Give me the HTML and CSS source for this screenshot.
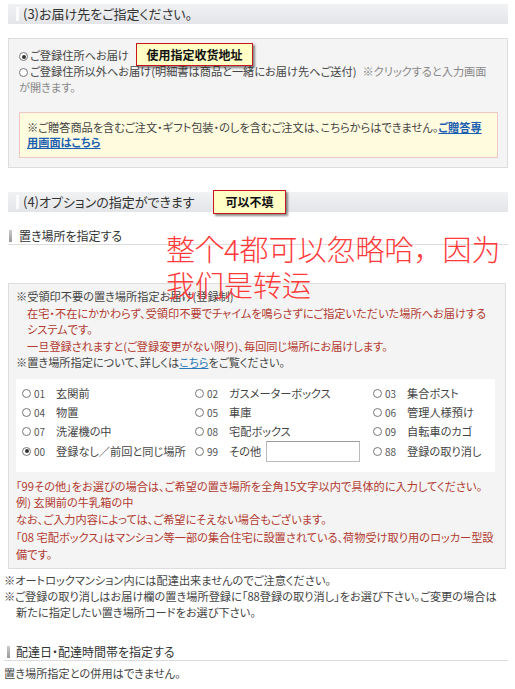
FILE: index.html
```html
<!DOCTYPE html>
<html lang="ja">
<head>
<meta charset="utf-8">
<title>お届け先</title>
<link rel="stylesheet" href="styles.css">
</head>
<body>
<div class="page">
  <h2 class="sec-head"><span class="bar"></span>(3)お届け先をご指定ください。</h2>
  <div class="box box1">
    <p class="line"><span class="radio on"></span>ご登録住所へお届け</p>
    <p class="line"><span class="radio"></span>ご登録住所以外へお届け(明細書は商品と一緒にお届け先へご送付)<span class="hint">※クリックすると入力画面<br>が開きます。</span></p>
    <div class="note">※ご贈答商品を含むご注文・ギフト包装・のしを含むご注文は、こちらからはできません。<a class="strong-link" href="#">ご贈答専<br>用画面はこちら</a></div>
  </div>

  <h2 class="sec-head sec4"><span class="bar"></span>(4)オプションの指定ができます</h2>

  <h3 class="sub-head"><span class="sbar"></span>置き場所を指定する</h3>

  <div class="box box2">
    <p class="line">※受領印不要の置き場所指定お届け(登録制)</p>
    <p class="line red indent">在宅・不在にかかわらず、受領印不要でチャイムを鳴らさずにご指定いただいた場所へお届けする<br>システムです。</p>
    <p class="line red indent">一旦登録されますと(ご登録変更がない限り)、毎回同じ場所にお届けします。</p>
    <p class="line">※置き場所指定について、詳しくは<a class="link" href="#">こちら</a>をご覧ください。</p>

    <div class="opts">
      <label class="opt"><span class="radio"></span><span class="num">01</span>玄関前</label>
      <label class="opt"><span class="radio"></span><span class="num">02</span>ガスメーターボックス</label>
      <label class="opt"><span class="radio"></span><span class="num">03</span>集合ポスト</label>
      <label class="opt"><span class="radio"></span><span class="num">04</span>物置</label>
      <label class="opt"><span class="radio"></span><span class="num">05</span>車庫</label>
      <label class="opt"><span class="radio"></span><span class="num">06</span>管理人様預け</label>
      <label class="opt"><span class="radio"></span><span class="num">07</span>洗濯機の中</label>
      <label class="opt"><span class="radio"></span><span class="num">08</span>宅配ボックス</label>
      <label class="opt"><span class="radio"></span><span class="num">09</span>自転車のカゴ</label>
      <label class="opt"><span class="radio on"></span><span class="num">00</span>登録なし／前回と同じ場所</label>
      <label class="opt"><span class="radio"></span><span class="num">99</span>その他<span class="textbox"></span></label>
      <label class="opt"><span class="radio"></span><span class="num">88</span>登録の取り消し</label>
    </div>

    <p class="line red after-opts">「99その他」をお選びの場合は、ご希望の置き場所を全角15文字以内で具体的に入力してください。<br>例) 玄関前の牛乳箱の中<br>なお、ご入力内容によっては、ご希望にそえない場合もございます。</p>
    <p class="line red para">「08 宅配ボックス」はマンション等一部の集合住宅に設置されている、荷物受け取り用のロッカー型設<br>備です。</p>
  </div>

  <p class="outer first">※オートロックマンション内には配達出来ませんのでご注意ください。</p>
  <p class="outer hang">※ご登録の取り消しはお届け欄の置き場所登録に「88登録の取り消し」をお選び下さい。ご変更の場合は<br>新たに指定したい置き場所コードをお選び下さい。</p>

  <h3 class="sub-head sub2"><span class="sbar"></span>配達日・配達時間帯を指定する</h3>
  <p class="outer last">置き場所指定との併用はできません。</p>

  <div class="tip tip1">使用指定收货地址</div>
  <div class="tip tip2">可以不填</div>
  <div class="overlay">整个4都可以忽略哈，因为<br>我们是转运</div>
</div>
</body>
</html>
```
FILE: styles.css
```css
* { box-sizing: border-box; }
html, body { margin: 0; padding: 0; background: #fff; }
body {
  width: 515px;
  height: 689px;
  overflow: hidden;
  font-family: "Noto Sans CJK JP", "Liberation Sans", sans-serif;
  font-size: 11.2px;
  color: #444;
  font-feature-settings: "palt";
}
.page {
  position: relative;
  padding: 4px 7px 0 4px;
}
p { margin: 0; white-space: nowrap; }

.sec-head {
  margin: 0 0 0 4px;
  height: 20px;
  line-height: 20px;
  font-size: 13px;
  font-weight: normal;
  color: #333;
  padding-left: 8px;
  background: linear-gradient(#f1f2f4, #e3e5e8);
  display: flex;
  align-items: center;
}
.sec-head .bar {
  width: 3px;
  height: 14px;
  background: #fbfbfb;
  margin-right: 4px;
}
.sec4 { margin-top: 24px; }

.box {
  margin-left: 4px;
  border: 1px solid #ddd;
  background: #f4f4f4;
}
.box1 {
  margin-top: 14px;
  padding: 8px 9px 9px 10px;
}
.box1 .line { line-height: 16px; }
.hint { color: #888; margin-left: 6px; }

.radio {
  display: inline-block;
  width: 9px;
  height: 9px;
  border: 1px solid #777;
  border-radius: 50%;
  background: #fff;
  margin-right: 2px;
  vertical-align: -1px;
  position: relative;
}
.radio.on::after {
  content: "";
  position: absolute;
  left: 1.5px;
  top: 1.5px;
  width: 4px;
  height: 4px;
  border-radius: 50%;
  background: #333;
}

.note {
  margin-top: 17px;
  border: 1px solid #f0c6c6;
  background: #fffbdf;
  padding: 7px 8px 7px 7px;
  line-height: 15px;
  white-space: nowrap;
}
.strong-link {
  color: #1c5fb0;
  font-weight: bold;
  text-decoration: underline;
}

.sub-head {
  margin: 16px 0 0 4px;
  height: 17px;
  line-height: 16px;
  font-size: 12px;
  font-weight: normal;
  color: #333;
  border-bottom: 1px solid #ddd;
  padding-left: 1px;
  display: flex;
  align-items: center;
}
.sub-head .sbar {
  width: 3px;
  height: 12px;
  background: linear-gradient(#ccc, #999);
  margin-right: 7px;
  margin-bottom: 1px;
}
.sub2 {
  margin: 24px 0 0 0;
  padding-left: 3px;
}
.sub2 .sbar { margin-right: 6px; }

.box2 {
  margin-top: 38px;
  margin-right: 2px;
  padding: 4px 10px 6px 7px;
}
.box2 .line { line-height: 16.5px; }
.red { color: #b23a30; }
.indent { padding-left: 11px; }
.link { color: #2a78b8; text-decoration: underline; }

.opts {
  margin-top: 8px;
  background: #fff;
  padding: 5px 0 10px 6px;
  display: grid;
  grid-template-columns: 173px 178px 1fr;
  grid-auto-rows: minmax(19px, auto);
  align-items: center;
}
.opt {
  display: flex;
  align-items: center;
  white-space: nowrap;
  line-height: 19px;
}
.opt .radio { margin-right: 3px; flex: none; }
.num {
  display: inline-block;
  width: 22px;
  font-size: 10px;
  color: #555;
}
.textbox {
  display: inline-block;
  width: 94px;
  height: 21px;
  margin-left: 5px;
  background: #fff;
  border: 1px solid #bbb;
  border-top-color: #999;
}
.after-opts { margin-top: 6px; }
.para { margin-top: 2px; }

.outer { line-height: 16px; }
.outer.first { margin-top: 3px; }
.hang { padding-left: 12px; text-indent: -12px; }
.outer.last { margin-top: 4px; }

.tip {
  position: absolute;
  background: #ffffc6;
  border: 1px solid #c8161d;
  box-shadow: 2px 2px 2px rgba(0, 0, 0, 0.45);
  font-family: "Noto Sans CJK SC", sans-serif;
  font-weight: bold;
  font-size: 12px;
  color: #111;
  text-align: center;
  font-feature-settings: normal;
}
.tip1 { left: 136px; top: 43px; width: 117px; height: 23px; line-height: 21px; }
.tip2 { left: 213px; top: 190px; width: 73px; height: 24px; line-height: 22px; }

.overlay {
  position: absolute;
  left: 166px;
  top: 230px;
  font-family: "Noto Sans CJK SC", sans-serif;
  font-weight: 300;
  font-size: 29px;
  line-height: 36px;
  color: #ff3a3a;
  white-space: nowrap;
  font-feature-settings: normal;
}
```
